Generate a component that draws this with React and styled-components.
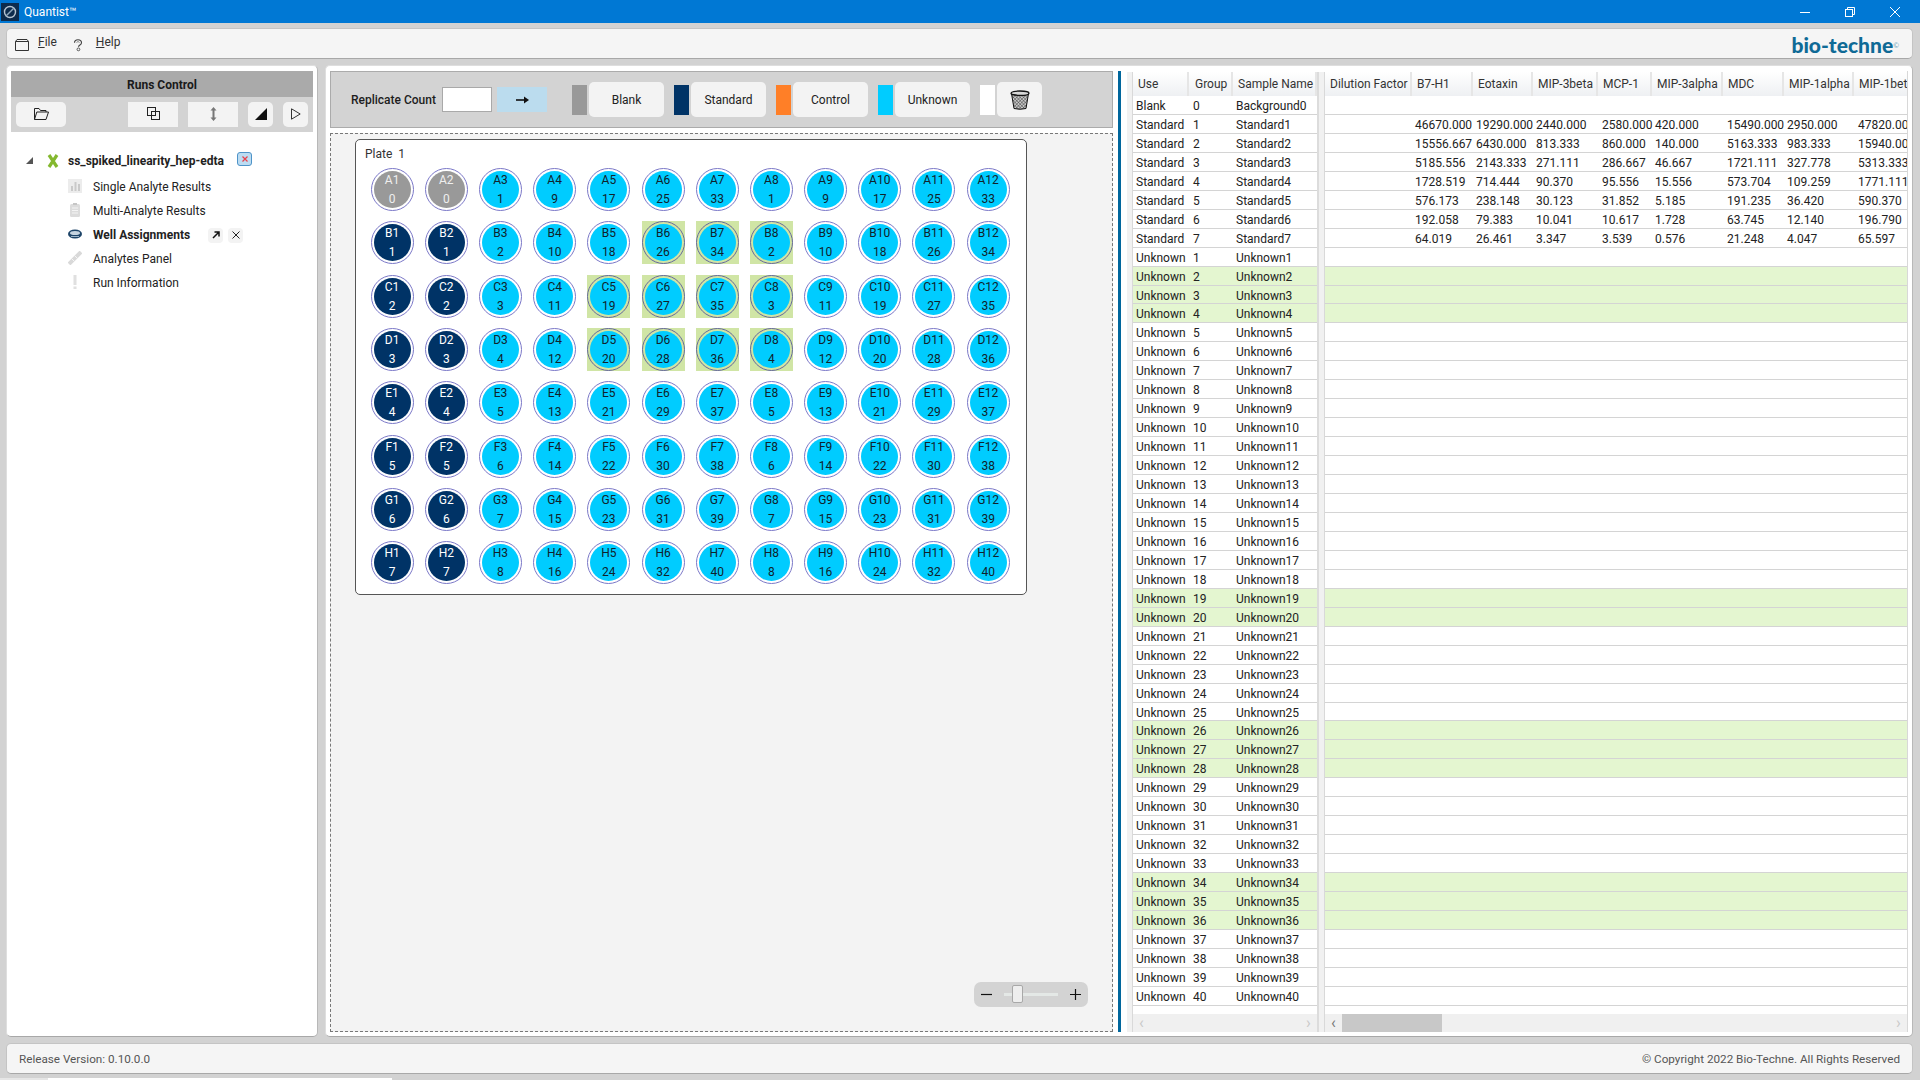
import React from "react";
import styled, { createGlobalStyle } from "styled-components";

const GlobalStyle = createGlobalStyle`
  html, body { margin: 0; padding: 0; background: #d2d2d2; }
  body { font-family: Roboto, "Open Sans", "Liberation Sans", sans-serif; font-size: 12px; color: #1c1c1c; }
  * { box-sizing: border-box; }
`;

const ROWS = ["A", "B", "C", "D", "E", "F", "G", "H"];
const SELECTED = ["B6", "B7", "B8", "C5", "C6", "C7", "C8", "D5", "D6", "D7", "D8"];
const GREEN_GROUPS = [2, 3, 4, 19, 20, 26, 27, 28, 34, 35, 36];

const buildWell = (row, rowIdx, col) => {
  const id = `${row}${col}`;
  if (col <= 2) {
    return { id, group: rowIdx, kind: rowIdx === 0 ? "blank" : "standard", selected: false };
  }
  const block = (col - 3) % 5;
  return { id, group: block * 8 + rowIdx + 1, kind: "unknown", selected: SELECTED.includes(id) };
};

const WELLS = ROWS.flatMap((row, rowIdx) =>
  Array.from({ length: 12 }, (_, i) => buildWell(row, rowIdx, i + 1))
);

const FROZEN = [
  { title: "Use", width: 56, pad: 3, headPad: 5 },
  { title: "Group", width: 44, pad: 4, headPad: 6 },
  { title: "Sample Name", width: 84, pad: 3, headPad: 5 },
];

const COLUMNS = [
  { title: "Dilution Factor", width: 87, pad: 4, headPad: 5 },
  { title: "B7-H1", width: 61, pad: 3, headPad: 5 },
  { title: "Eotaxin", width: 60, pad: 3, headPad: 5 },
  { title: "MIP-3beta", width: 65, pad: 3, headPad: 5 },
  { title: "MCP-1", width: 54, pad: 4, headPad: 5 },
  { title: "MIP-3alpha", width: 71, pad: 3, headPad: 5 },
  { title: "MDC", width: 61, pad: 4, headPad: 5 },
  { title: "MIP-1alpha", width: 70, pad: 3, headPad: 5 },
  { title: "MIP-1beta", width: 70, pad: 4, headPad: 5 },
];

const STANDARD_VALUES = [
  ["46670.000", "19290.000", "2440.000", "2580.000", "420.000", "15490.000", "2950.000", "47820.000"],
  ["15556.667", "6430.000", "813.333", "860.000", "140.000", "5163.333", "983.333", "15940.000"],
  ["5185.556", "2143.333", "271.111", "286.667", "46.667", "1721.111", "327.778", "5313.333"],
  ["1728.519", "714.444", "90.370", "95.556", "15.556", "573.704", "109.259", "1771.111"],
  ["576.173", "238.148", "30.123", "31.852", "5.185", "191.235", "36.420", "590.370"],
  ["192.058", "79.383", "10.041", "10.617", "1.728", "63.745", "12.140", "196.790"],
  ["64.019", "26.461", "3.347", "3.539", "0.576", "21.248", "4.047", "65.597"],
];

const SAMPLES = [
  { use: "Blank", group: 0, name: "Background0", values: [] },
  ...STANDARD_VALUES.map((values, i) => ({ use: "Standard", group: i + 1, name: `Standard${i + 1}`, values })),
  ...Array.from({ length: 40 }, (_, i) => ({ use: "Unknown", group: i + 1, name: `Unknown${i + 1}`, values: [] })),
];

const WELL_FILL = { blank: "#999999", standard: "#003366", unknown: "#00ccff" };
const WELL_TEXT = { blank: "#efefef", standard: "#ffffff", unknown: "#10222b" };

const App = () => (
  <Page>
    <GlobalStyle />
    <TitleBar>
      <AppIcon viewBox="0 0 18 18">
        <rect width="18" height="18" fill="#0d2c4c" />
        <circle cx="9" cy="9" r="5.5" fill="none" stroke="#b8c6d2" strokeWidth="1.4" />
        <path d="M5 13 L13 5" stroke="#8fa8bc" strokeWidth="1.4" />
      </AppIcon>
      <AppTitle>Quantist™</AppTitle>
      <WindowButtons>
        <svg width="10" height="10" viewBox="0 0 10 10"><path d="M0 5.5H10" stroke="#fff" /></svg>
        <svg width="10" height="10" viewBox="0 0 10 10" fill="none" stroke="#fff">
          <rect x="0.5" y="2.5" width="7" height="7" />
          <path d="M2.5 2.5V0.5H9.5V7.5H7.5" />
        </svg>
        <svg width="10" height="10" viewBox="0 0 10 10"><path d="M0 0L10 10M10 0L0 10" stroke="#fff" /></svg>
      </WindowButtons>
    </TitleBar>

    <MenuBar>
      <MenuIcon viewBox="0 0 16 14" $w={16}>
        <path d="M1.5 3.5H14.5V12.5H1.5Z M1.5 3.5L3 1.5H13L14.5 3.5" fill="none" stroke="#333" />
      </MenuIcon>
      <MenuItem $left={8} $right={15}><u>F</u>ile</MenuItem>
      <MenuIcon viewBox="0 0 12 16" $w={12}>
        <path d="M2 5.5C2 0.8 10 0.8 10 5.5C10 8 7 8 6.5 10" fill="none" stroke="#444" strokeWidth="1.3" />
        <path d="M4.5 5.5C4.5 3.5 7.5 3.5 7.5 5.5" fill="none" stroke="#888" />
        <circle cx="6.5" cy="13" r="1.6" fill="none" stroke="#444" />
      </MenuIcon>
      <MenuItem $left={12} $right={0}><u>H</u>elp</MenuItem>
      <Logo>bio-techne<LogoMark>©</LogoMark></Logo>
    </MenuBar>

    <Main>
      <SidePanel>
        <SideHeader>Runs Control</SideHeader>
        <SideTools>
          <ToolButton $w={50} $round>
            <svg width="17" height="14" viewBox="0 0 17 14" fill="none" stroke="#222">
              <path d="M1.5 12.5V1.5H6L7.5 3.5H13V5M1.5 12.5H13L15.5 5H3.8L1.5 12.5Z" />
            </svg>
          </ToolButton>
          <ToolSpacer />
          <ToolButton $w={50}>
            <svg width="13" height="13" viewBox="0 0 13 13" fill="none" stroke="#222">
              <rect x="0.5" y="0.5" width="8" height="8" />
              <rect x="4.5" y="4.5" width="8" height="8" />
            </svg>
          </ToolButton>
          <ToolButton $w={50}>
            <svg width="7" height="14" viewBox="0 0 7 14" fill="#777">
              <path d="M3.5 0L6.5 3.5H4.5V10.5H6.5L3.5 14L0.5 10.5H2.5V3.5H0.5Z" />
            </svg>
          </ToolButton>
          <ToolButton $w={25} $round>
            <svg width="12" height="12" viewBox="0 0 12 12"><path d="M12 0V12H0Z" fill="#111" /></svg>
          </ToolButton>
          <ToolButton $w={25} $round>
            <svg width="10" height="12" viewBox="0 0 10 12"><path d="M0.5 0.8V11.2L9.2 6Z" fill="none" stroke="#333" /></svg>
          </ToolButton>
        </SideTools>

        <Tree>
          <RunRow>
            <svg width="7" height="7" viewBox="0 0 7 7"><path d="M7 0V7H0Z" fill="#555" /></svg>
            <svg width="12" height="14" viewBox="0 0 12 14" stroke="#84b82f" strokeWidth="3.2">
              <path d="M2 1L10 13M10 1L2 13" />
            </svg>
            <RunName>ss_spiked_linearity_hep-edta</RunName>
            <RunClose>
              <svg width="6" height="6" viewBox="0 0 6 6"><path d="M0.5 0.5L5.5 5.5M5.5 0.5L0.5 5.5" stroke="#e8404a" strokeWidth="1.2" /></svg>
            </RunClose>
          </RunRow>
          <TreeItem>
            <TreeIcon viewBox="0 0 14 14">
              <rect width="14" height="14" fill="#ececec" />
              <path d="M3 12V7H5V12ZM6.5 12V3H8.5V12ZM10 12V5H12V12Z" fill="#c9c9c9" />
            </TreeIcon>
            <TreeLabel>Single Analyte Results</TreeLabel>
          </TreeItem>
          <TreeItem>
            <TreeIcon viewBox="0 0 14 14">
              <rect x="2" y="1" width="10" height="13" rx="1.5" fill="#dcdcdc" />
              <path d="M4 5H10M4 7.5H10M4 10H10" stroke="#f4f4f4" />
              <rect x="5" y="0" width="4" height="2" fill="#c6c6c6" />
            </TreeIcon>
            <TreeLabel>Multi-Analyte Results</TreeLabel>
          </TreeItem>
          <TreeItem>
            <TreeIcon viewBox="0 0 14 14">
              <ellipse cx="7" cy="7" rx="7" ry="4.5" fill="#1d4468" />
              <ellipse cx="7" cy="6" rx="5" ry="2" fill="#c6d4e0" />
              <path d="M3 9.5H11" stroke="#9db4c8" />
            </TreeIcon>
            <TreeLabel $bold>Well Assignments</TreeLabel>
            <MiniButton>
              <svg width="8" height="8" viewBox="0 0 8 8"><path d="M1 7L7 1M2.5 1H7V5.5" fill="none" stroke="#111" strokeWidth="1.5" /></svg>
            </MiniButton>
            <MiniButton>
              <svg width="8" height="8" viewBox="0 0 8 8"><path d="M0.5 0.5L7.5 7.5M7.5 0.5L0.5 7.5" stroke="#222" /></svg>
            </MiniButton>
          </TreeItem>
          <TreeItem>
            <TreeIcon viewBox="0 0 14 14">
              <path d="M1 13L13 1" stroke="#d9d9d9" strokeWidth="4" />
              <path d="M3 7L7 11M6 4L10 8" stroke="#f5f5f5" />
            </TreeIcon>
            <TreeLabel>Analytes Panel</TreeLabel>
          </TreeItem>
          <TreeItem>
            <TreeIcon viewBox="0 0 14 14">
              <rect x="5.5" y="0" width="3" height="10" fill="#e0e0e0" />
              <rect x="5.5" y="11.5" width="3" height="2.5" fill="#e0e0e0" />
            </TreeIcon>
            <TreeLabel>Run Information</TreeLabel>
          </TreeItem>
        </Tree>
      </SidePanel>

      <ContentPanel>
        <CenterColumn>
          <Toolbar>
            <ReplicateLabel>Replicate Count</ReplicateLabel>
            <ReplicateInput />
            <ArrowButton>
              <svg width="13" height="8" viewBox="0 0 13 8"><path d="M0 4H9" stroke="#111" strokeWidth="1.6" /><path d="M8 0.5L13 4L8 7.5Z" fill="#111" /></svg>
            </ArrowButton>
            <Swatch $color="#999999" />
            <AssignButton>Blank</AssignButton>
            <Swatch $color="#003366" />
            <AssignButton>Standard</AssignButton>
            <Swatch $color="#ff7f27" />
            <AssignButton>Control</AssignButton>
            <Swatch $color="#00ccff" />
            <AssignButton>Unknown</AssignButton>
            <Swatch $color="#ffffff" />
            <TrashButton>
              <svg width="20" height="20" viewBox="0 0 20 20">
                <defs>
                  <pattern id="mesh" width="2.4" height="2.4" patternUnits="userSpaceOnUse" patternTransform="rotate(45)">
                    <rect width="2.4" height="2.4" fill="#c9c9c9" />
                    <path d="M0 0H2.4M0 0V2.4" stroke="#333" strokeWidth="0.8" />
                  </pattern>
                </defs>
                <path d="M1.5 3.5L4 18.5Q10 20 16 18.5L18.5 3.5Z" fill="url(#mesh)" stroke="#111" />
                <ellipse cx="10" cy="3.2" rx="9" ry="2.2" fill="#d8d8d8" stroke="#111" strokeWidth="1.3" />
              </svg>
            </TrashButton>
          </Toolbar>

          <PlateArea>
            <PlateCard>
              <PlateLabel>Plate&nbsp; 1</PlateLabel>
              <WellGrid>
                {WELLS.map((well) => (
                  <WellCell key={well.id}>
                    <WellSquare $selected={well.selected}>
                      <Well $kind={well.kind} $selected={well.selected}>
                        <span>{well.id}</span>
                        <span>{well.group}</span>
                      </Well>
                    </WellSquare>
                  </WellCell>
                ))}
              </WellGrid>
            </PlateCard>
            <ZoomControl>
              <svg width="11" height="11" viewBox="0 0 11 11"><path d="M0 5.5H11" stroke="#111" strokeWidth="1.2" /></svg>
              <ZoomTrack><ZoomThumb /></ZoomTrack>
              <svg width="11" height="11" viewBox="0 0 11 11"><path d="M0 5.5H11M5.5 0V11" stroke="#111" strokeWidth="1.2" /></svg>
            </ZoomControl>
          </PlateArea>
        </CenterColumn>

        <Splitter />

        <DataGrid>
          <FrozenPane>
            <RowHeaderStrip />
            <PaneBody>
              <HeaderRow>
                {FROZEN.map((c) => (
                  <HeaderCell key={c.title} $w={c.width} $pad={c.headPad}>{c.title}</HeaderCell>
                ))}
              </HeaderRow>
              {SAMPLES.map((s) => (
                <DataRow key={s.name} $green={s.use === "Unknown" && GREEN_GROUPS.includes(s.group)}>
                  <Cell $w={FROZEN[0].width} $pad={FROZEN[0].pad}>{s.use}</Cell>
                  <Cell $w={FROZEN[1].width} $pad={FROZEN[1].pad}>{s.group}</Cell>
                  <Cell $w={FROZEN[2].width} $pad={FROZEN[2].pad}>{s.name}</Cell>
                </DataRow>
              ))}
              <Scrollbar>
                <ScrollArrow $faint>‹</ScrollArrow>
                <ScrollArrow $faint>›</ScrollArrow>
              </Scrollbar>
            </PaneBody>
          </FrozenPane>
          <PaneDivider />
          <ScrollPane>
            <RowHeaderStrip />
            <PaneBody>
              <HeaderRow>
                {COLUMNS.map((c) => (
                  <HeaderCell key={c.title} $w={c.width} $pad={c.headPad}>{c.title}</HeaderCell>
                ))}
              </HeaderRow>
              {SAMPLES.map((s) => (
                <DataRow key={s.name} $green={s.use === "Unknown" && GREEN_GROUPS.includes(s.group)}>
                  <Cell $w={COLUMNS[0].width} $pad={COLUMNS[0].pad} />
                  {COLUMNS.slice(1).map((c, i) => (
                    <Cell key={c.title} $w={c.width} $pad={c.pad}>{s.values[i]}</Cell>
                  ))}
                </DataRow>
              ))}
              <Scrollbar>
                <ScrollArrow>‹</ScrollArrow>
                <ScrollThumb />
                <ScrollArrow $faint>›</ScrollArrow>
              </Scrollbar>
            </PaneBody>
          </ScrollPane>
        </DataGrid>
      </ContentPanel>
    </Main>

    <StatusBar>
      <span>Release Version: 0.10.0.0</span>
      <span>© Copyright 2022 Bio-Techne. All Rights Reserved</span>
    </StatusBar>
    <BottomStrip />
  </Page>
);

export default App;

const Page = styled.div`
  width: 1920px;
  height: 1080px;
  display: flex;
  flex-direction: column;
  overflow: hidden;
  background: #d2d2d2;
`;

const TitleBar = styled.div`
  height: 23px;
  background: #0078d4;
  display: flex;
  align-items: center;
  color: #fff;
  flex: none;
`;

const AppIcon = styled.svg`
  width: 18px;
  height: 18px;
  margin-left: 1px;
`;

const AppTitle = styled.div`
  margin-left: 5px;
  font-size: 12px;
`;

const WindowButtons = styled.div`
  margin-left: auto;
  display: flex;
  gap: 35px;
  padding-right: 20px;
`;

const MenuBar = styled.div`
  margin: 5px 7px 0 6px;
  height: 31px;
  flex: none;
  display: flex;
  align-items: center;
  padding-left: 7px;
  background: #f5f5f5;
  border: 1px solid #c4c4c4;
  border-bottom-color: #a8a8a8;
  border-radius: 5px;
`;

const MenuIcon = styled.svg`
  width: ${(p) => p.$w}px;
  height: 14px;
  margin-top: 3px;
`;

const MenuItem = styled.div`
  margin: 0 ${(p) => p.$right}px 0 ${(p) => p.$left}px;
  color: #333;
  position: relative;
  top: -2px;
`;

const Logo = styled.div`
  margin-left: auto;
  margin-right: 13px;
  margin-top: 2px;
  font-family: "Lato", sans-serif;
  font-weight: 900;
  font-size: 21px;
  color: #0f6a96;
  display: flex;
`;

const LogoMark = styled.span`
  font-size: 7px;
  font-weight: 400;
  margin-top: 9px;
  color: #6b9fb8;
`;

const Main = styled.div`
  flex: 1;
  min-height: 0;
  margin: 6px 7px 0 6px;
  display: flex;
  gap: 7px;
`;

const Panel = styled.div`
  background: #fff;
  border: 1px solid #dedede;
  border-bottom-color: #a8a8a8;
  border-right-color: #b8b8b8;
  border-radius: 5px;
`;

const SidePanel = styled(Panel)`
  width: 312px;
  flex: none;
  padding: 5px 4px 4px;
`;

const SideHeader = styled.div`
  height: 26px;
  padding-top: 2px;
  background: #aaaaaa;
  display: flex;
  align-items: center;
  justify-content: center;
  font-weight: 700;
  color: #1a1a1a;
`;

const SideTools = styled.div`
  height: 35px;
  background: #d3d3d3;
  display: flex;
  align-items: center;
  gap: 10px;
  padding: 0 5px;
`;

const ToolSpacer = styled.div`
  width: 42px;
`;

const ToolButton = styled.div`
  width: ${(p) => p.$w}px;
  height: 25px;
  padding-bottom: 2px;
  background: #f3f3f3;
  border-radius: ${(p) => (p.$round ? "5px" : "0")};
  display: flex;
  align-items: center;
  justify-content: center;
`;

const Tree = styled.div`
  padding: 14px 0 0 15px;
  display: flex;
  flex-direction: column;
`;

const RunRow = styled.div`
  height: 29px;
  display: flex;
  align-items: center;
  gap: 14px;
`;

const RunName = styled.div`
  width: 156px;
  font-weight: 700;
  margin-left: -5px;
  color: #222;
  white-space: nowrap;
`;

const RunClose = styled.div`
  width: 15px;
  height: 14px;
  margin-left: -1px;
  margin-top: -4px;
  border: 1px solid #4e93c8;
  border-radius: 3px;
  background: #bcdcf2;
  display: flex;
  align-items: center;
  justify-content: center;
`;

const TreeItem = styled.div`
  height: 24px;
  display: flex;
  align-items: center;
  padding-left: 42px;
`;

const TreeIcon = styled.svg`
  width: 14px;
  height: 14px;
  margin-top: -3px;
`;

const TreeLabel = styled.div`
  margin-left: 11px;
  width: ${(p) => (p.$bold ? "115px" : "auto")};
  font-weight: ${(p) => (p.$bold ? 700 : 400)};
  color: #222;
  white-space: nowrap;
`;

const MiniButton = styled.div`
  width: 15px;
  height: 15px;
  margin-right: 5px;
  background: #f3f3f3;
  border-radius: 4px;
  display: flex;
  align-items: center;
  justify-content: center;
`;

const ContentPanel = styled(Panel)`
  flex: 1;
  min-width: 0;
  padding: 5px 4px 4px;
  display: flex;
`;

const CenterColumn = styled.div`
  width: 783px;
  flex: none;
  display: flex;
  flex-direction: column;
  gap: 5px;
`;

const Toolbar = styled.div`
  height: 57px;
  flex: none;
  background: #d3d3d3;
  border: 1px solid #ababab;
  display: flex;
  align-items: center;
  padding-left: 20px;
`;

const ReplicateLabel = styled.div`
  width: 91px;
  font-weight: 500;
  white-space: nowrap;
  color: #1d1d1d;
`;

const ReplicateInput = styled.div`
  width: 50px;
  height: 25px;
  background: #fff;
  border: 1px solid #a9a9a9;
`;

const ArrowButton = styled.div`
  width: 50px;
  height: 25px;
  margin: 0 25px 0 5px;
  background: #bbdcee;
  display: flex;
  align-items: center;
  justify-content: center;
`;

const Swatch = styled.div`
  width: 15px;
  height: 30px;
  background: ${(p) => p.$color};
`;

const AssignButton = styled.div`
  width: 75px;
  height: 35px;
  margin: 0 10px 0 2px;
  background: #f3f3f3;
  border-radius: 5px;
  display: flex;
  align-items: center;
  justify-content: center;
  color: #222;
`;

const TrashButton = styled(AssignButton)`
  width: 45px;
  margin-right: 0;
`;

const PlateArea = styled.div`
  flex: 1;
  min-height: 0;
  position: relative;
  background: #f3f3f3;
  border: 1px dashed #777;
  padding: 5px 0 0 24px;
`;

const PlateCard = styled.div`
  width: 672px;
  height: 456px;
  background: #fff;
  border: 1px solid #555;
  border-radius: 5px;
  padding: 7px 0 0 9px;
`;

const PlateLabel = styled.div`
  height: 16px;
  line-height: 15px;
  color: #333;
`;

const WellGrid = styled.div`
  display: grid;
  grid-template-columns: repeat(12, 54.2px);
  grid-auto-rows: 53.3px;
`;

const WellCell = styled.div`
  display: flex;
  align-items: center;
  justify-content: center;
`;

const WellSquare = styled.div`
  width: 43px;
  height: 43px;
  background: ${(p) => (p.$selected ? "#d0e5a5" : "transparent")};
`;

const Well = styled.div`
  width: 43px;
  height: 43px;
  border-radius: 50%;
  border: 1px solid ${(p) => (p.$selected ? "#66699c" : "#7b78c8")};
  background: ${(p) => WELL_FILL[p.$kind]};
  background-clip: content-box;
  padding: 2px;
  color: ${(p) => WELL_TEXT[p.$kind]};
  display: flex;
  flex-direction: column;
  align-items: center;
  justify-content: center;
  gap: 3px;
  font-size: 12px;
  line-height: 16px;
`;

const ZoomControl = styled.div`
  position: absolute;
  right: 24px;
  bottom: 24px;
  width: 114px;
  height: 25px;
  background: #d3d3d3;
  border-radius: 7px;
  display: flex;
  align-items: center;
  justify-content: space-between;
  padding: 0 7px;
`;

const ZoomTrack = styled.div`
  width: 54px;
  height: 3px;
  background: #e4e8e6;
  position: relative;
`;

const ZoomThumb = styled.div`
  position: absolute;
  left: 8px;
  top: -8px;
  width: 11px;
  height: 18px;
  background: #eeeeee;
  border: 1px solid #a8a8a8;
  border-radius: 2px;
`;

const Splitter = styled.div`
  width: 3px;
  margin: 0 6px 0 5px;
  flex: none;
  background: #00669c;
`;

const DataGrid = styled.div`
  flex: 1;
  min-width: 0;
  display: flex;
  padding-top: 1px;
  border-right: 1px solid #d8d8d8;
  overflow: hidden;
`;

const FrozenPane = styled.div`
  display: flex;
  flex: none;
`;

const ScrollPane = styled.div`
  display: flex;
  flex: 1;
  min-width: 0;
  overflow: hidden;
`;

const RowHeaderStrip = styled.div`
  width: 6px;
  flex: none;
  background: #f1f1f1;
  border-right: 1px solid #d9d9d9;
`;

const PaneDivider = styled.div`
  width: 2px;
  flex: none;
  background: #dcdcdc;
`;

const PaneBody = styled.div`
  flex: 1;
  min-width: 0;
  display: flex;
  flex-direction: column;
`;

const HeaderRow = styled.div`
  height: 24px;
  display: flex;
  flex: none;
  background: linear-gradient(#ffffff, #eef0f3);
`;

const HeaderCell = styled.div`
  width: ${(p) => p.$w}px;
  flex: none;
  padding-left: ${(p) => p.$pad}px;
  line-height: 25px;
  white-space: nowrap;
  border-right: 2px solid #e6e6e6;
  color: #333;
`;

const DataRow = styled.div`
  height: 18.96px;
  flex: none;
  display: flex;
  background: ${(p) => (p.$green ? "#e4f6d0" : "#fff")};
  border-bottom: 1px solid #d4d4d4;
`;

const Cell = styled.div`
  width: ${(p) => p.$w}px;
  flex: none;
  padding-left: ${(p) => p.$pad}px;
  line-height: 20px;
  white-space: nowrap;
  color: #222;
`;

const Scrollbar = styled.div`
  height: 18px;
  margin-top: auto;
  flex: none;
  display: flex;
  align-items: center;
  justify-content: space-between;
  background: #f0f0f0;
`;

const ScrollArrow = styled.span`
  width: 17px;
  text-align: center;
  font-size: 16px;
  line-height: 16px;
  color: ${(p) => (p.$faint ? "#c8c8c8" : "#777")};
`;

const ScrollThumb = styled.div`
  width: 100px;
  height: 18px;
  background: #c8c8c8;
  margin-right: auto;
`;

const StatusBar = styled.div`
  margin: 6px 7px 4px 6px;
  height: 31px;
  flex: none;
  padding: 0 12px;
  display: flex;
  align-items: center;
  justify-content: space-between;
  background: #f5f5f5;
  border: 1px solid #c4c4c4;
  border-bottom-color: #a8a8a8;
  border-radius: 5px;
  color: #555;
  font-size: 11.7px;
`;

const BottomStrip = styled.div`
  width: 392px;
  height: 2px;
  flex: none;
  background: linear-gradient(90deg, #e6e6e6 48px, #ffffff 48px);
`;
